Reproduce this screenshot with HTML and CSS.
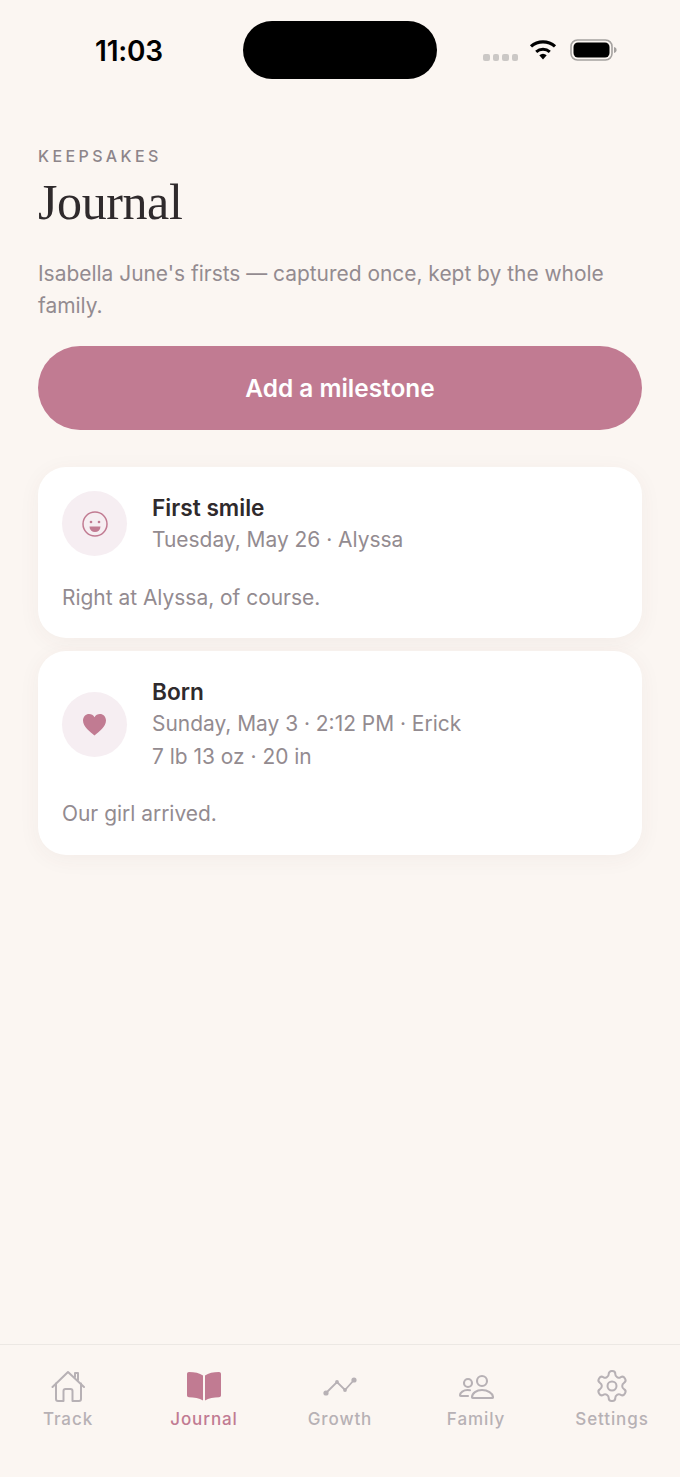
FILE: index.html
```html
<!DOCTYPE html>
<html lang="en">
<head>
<meta charset="utf-8">
<title>Journal</title>
<link rel="stylesheet" href="styles.css">
</head>
<body>
<div class="page">
  <header class="status">
    <span class="time">11:03</span>
    <div class="island"></div>
    <div class="status-icons">
      <div class="dots"><i></i><i></i><i></i><i></i></div>
      <svg class="wifi" viewBox="0 0 28 20" width="28" height="20"><path d="M14 19.500 10.300 15.300a5.600 5.600 0 0 1 7.400 0Z" fill="#000"/><path d="M7.200 11.900a10.200 10.200 0 0 1 13.600 0" fill="none" stroke="#000" stroke-width="3"/><path d="M2 6.400a18 18 0 0 1 24 0" fill="none" stroke="#000" stroke-width="3.200"/></svg>
      <svg class="battery" viewBox="0 0 47 22" width="47" height="22"><rect x="1" y="1" width="41" height="20" rx="6.500" fill="none" stroke="#a5a2a0" stroke-width="1.600"/><rect x="3.500" y="3.500" width="36" height="15" rx="4.500" fill="#000"/><path d="M44 8v6c1.800-.4 2.600-1.600 2.600-3S45.800 8.400 44 8Z" fill="#a5a2a0"/></svg>
    </div>
  </header>

  <main class="content">
    <p class="eyebrow">KEEPSAKES</p>
    <h1 class="title">Journal</h1>
    <p class="intro">Isabella June's firsts — captured once, kept by the whole family.</p>
    <button class="cta" type="button">Add a milestone</button>

    <article class="card">
      <div class="card-head">
        <div class="badge">
          <svg viewBox="0 0 26 26" width="26" height="26"><circle cx="13" cy="13" r="12" fill="none" stroke="#c17b92" stroke-width="1.500"/><circle cx="9" cy="11" r="1.300" fill="#c17b92"/><circle cx="17" cy="11" r="1.300" fill="#c17b92"/><path d="M7.500 15.500h11a5.500 5.500 0 0 1-11 0Z" fill="#c17b92"/></svg>
        </div>
        <div class="card-text">
          <h2 class="card-title">First smile</h2>
          <p class="meta">Tuesday, May 26 · Alyssa</p>
        </div>
      </div>
      <p class="note">Right at Alyssa, of course.</p>
    </article>

    <article class="card">
      <div class="card-head">
        <div class="badge">
          <svg viewBox="0 0 26 24" width="25" height="23"><path d="M13 23.500C8.500 19.500 1 14.500 1 7.800 1 3.800 4 1 7.300 1 9.700 1 11.800 2.200 13 4.400 14.200 2.200 16.300 1 18.700 1 22 1 25 3.800 25 7.800 25 14.500 17.500 19.500 13 23.500Z" fill="#c17b92"/></svg>
        </div>
        <div class="card-text">
          <h2 class="card-title">Born</h2>
          <p class="meta">Sunday, May 3 · 2:12 PM · Erick</p>
          <p class="meta">7 lb 13 oz · 20 in</p>
        </div>
      </div>
      <p class="note">Our girl arrived.</p>
    </article>
  </main>

  <nav class="tabs">
    <div class="tab">
      <svg viewBox="0 0 34 32" width="34" height="32" fill="none" stroke="#b7b1b5" stroke-width="2" stroke-linejoin="round" stroke-linecap="round"><path d="M1.500 17 17 2l16 15"/><path d="M5 13.500V29q0 2 2 2H12.500V21q0-2 2-2h5q2 0 2 2V31H28q2 0 2-2V13.500"/><path d="M24 7V3H27V10"/></svg>
      <span>Track</span>
    </div>
    <div class="tab active">
      <svg viewBox="0 0 34 32" width="34" height="32" fill="#c17b92"><path d="M16 5.500V30.500C12.500 28.300 7 27.400 2 27.300 .8 27.300 0 26.500 0 25.300V4C0 2.800 .8 2 2 2 7.500 2 12.700 3 16 5.500Z"/><path d="M18 5.500V30.500C21.500 28.300 27 27.400 32 27.300 33.200 27.300 34 26.500 34 25.300V4C34 2.800 33.200 2 32 2 26.500 2 21.300 3 18 5.500Z"/></svg>
      <span>Journal</span>
    </div>
    <div class="tab">
      <svg viewBox="0 0 34 32" width="34" height="32" fill="#b7b1b5"><path d="M3 23 14 12 22 20 31 10" fill="none" stroke="#b7b1b5" stroke-width="1.800"/><circle cx="3" cy="23" r="2.600"/><circle cx="14" cy="12" r="1.900"/><circle cx="22" cy="20" r="1.900"/><circle cx="31" cy="10" r="2.600"/></svg>
      <span>Growth</span>
    </div>
    <div class="tab">
      <svg viewBox="0 0 36 32" width="36" height="32" fill="none" stroke="#b7b1b5" stroke-width="2.100" stroke-linecap="round"><circle cx="10" cy="13" r="4"/><circle cx="24" cy="11" r="5"/><path d="M12 20.300c-.8-.2-1.600-.3-2.500-.3C5.500 20 2 22.300 2 25.300c0 .5.300.7.700.7H10"/><path d="M14 27.300c0-4.200 4.500-7.300 10-7.300s11 3.100 11 7.300c0 .5-.3.700-.7.700H14.700c-.4 0-.7-.2-.7-.7Z"/></svg>
      <span>Family</span>
    </div>
    <div class="tab">
      <svg viewBox="1.300 1.300 21.400 21.400" width="32" height="32" fill="none" stroke="#b7b1b5" stroke-width="1.350" stroke-linejoin="round"><circle cx="12" cy="12" r="3"/><path d="M12.220 2h-.44a2 2 0 0 0-2 2v.18a2 2 0 0 1-1 1.730l-.43.25a2 2 0 0 1-2 0l-.15-.08a2 2 0 0 0-2.730.73l-.22.38a2 2 0 0 0 .73 2.730l.15.1a2 2 0 0 1 1 1.720v.51a2 2 0 0 1-1 1.740l-.15.09a2 2 0 0 0-.73 2.730l.22.38a2 2 0 0 0 2.730.73l.15-.08a2 2 0 0 1 2 0l.43.25a2 2 0 0 1 1 1.730V20a2 2 0 0 0 2 2h.44a2 2 0 0 0 2-2v-.18a2 2 0 0 1 1-1.730l.43-.25a2 2 0 0 1 2 0l.15.08a2 2 0 0 0 2.730-.73l.22-.39a2 2 0 0 0-.73-2.730l-.15-.08a2 2 0 0 1-1-1.740v-.5a2 2 0 0 1 1-1.740l.15-.09a2 2 0 0 0 .73-2.730l-.22-.38a2 2 0 0 0-2.730-.73l-.15.08a2 2 0 0 1-2 0l-.43-.25a2 2 0 0 1-1-1.730V4a2 2 0 0 0-2-2z"/></svg>
      <span>Settings</span>
    </div>
  </nav>
</div>
</body>
</html>
```

FILE: styles.css
```css
* { box-sizing: border-box; margin: 0; padding: 0; }

html, body { background: #fbf6f2; }

body {
  font-family: Inter, "Noto Sans", sans-serif;
  color: #2f2a2c;
}

.page {
  width: 680px;
  height: 1477px;
  display: flex;
  flex-direction: column;
  overflow: hidden;
}

.status {
  height: 100px;
  flex: none;
  position: relative;
  display: flex;
  align-items: center;
  justify-content: space-between;
  padding: 0 63px 0 95px;
}

.time {
  font-size: 28px;
  font-weight: 600;
  color: #000;
  line-height: 32px;
  letter-spacing: -0.2px;
  margin-top: 1px;
}

.island {
  position: absolute;
  left: 243px;
  top: 21px;
  width: 194px;
  height: 58px;
  border-radius: 29px;
  background: #000;
}

.status-icons {
  display: flex;
  align-items: center;
  gap: 13px;
}

.dots {
  display: flex;
  gap: 3px;
  margin-top: 15px;
  margin-right: -2px;
}

.dots i {
  width: 6.500px;
  height: 6.500px;
  border-radius: 2px;
  background: #cbc8c6;
}

.wifi { margin-top: -1px; }

.content {
  flex: 1;
  padding: 46px 38px 0;
  display: flex;
  flex-direction: column;
}

.eyebrow {
  font-size: 16px;
  font-weight: 500;
  line-height: 20px;
  letter-spacing: 3.400px;
  color: #8d858a;
}

.title {
  font-family: "Liberation Serif", serif;
  font-size: 50px;
  font-weight: 400;
  line-height: 56px;
  letter-spacing: -0.4px;
  margin-top: 8px;
  color: #2f2a2c;
}

.intro {
  font-size: 20.930px;
  line-height: 32px;
  color: #938b90;
  margin-top: 28px;
}

.cta {
  height: 84px;
  margin-top: 24px;
  border: none;
  border-radius: 42px;
  background: #c17b92;
  color: #fff;
  font-family: inherit;
  font-size: 24.420px;
  font-weight: 600;
}

.card {
  background: #fff;
  border-radius: 28px;
  padding: 24px 24px 24.500px;
  box-shadow: 0 4px 22px rgba(90, 60, 50, 0.05);
  margin-bottom: 13px;
}

.cta + .card { margin-top: 37px; }

.card-head {
  display: flex;
  align-items: center;
  gap: 25px;
}

.badge {
  width: 65px;
  height: 65px;
  flex: none;
  border-radius: 50%;
  background: #f6eef2;
  display: flex;
  align-items: center;
  justify-content: center;
}

.card-title {
  font-size: 22.670px;
  font-weight: 600;
  line-height: 33px;
  color: #2f2a2c;
}

.meta {
  font-size: 20.930px;
  line-height: 32.500px;
  color: #938b90;
}

.note {
  font-size: 20.930px;
  line-height: 32px;
  color: #938b90;
  margin-top: 25px;
}

.tabs {
  height: 133px;
  flex: none;
  border-top: 1px solid #ece8e4;
  display: grid;
  grid-template-columns: repeat(5, 1fr);
  padding-top: 25px;
}

.tab {
  display: flex;
  flex-direction: column;
  align-items: center;
  gap: 6px;
  color: #b7b1b5;
  font-size: 17px;
  font-weight: 500;
  line-height: 22px;
  letter-spacing: 0.900px;
}

.tab.active { color: #c17b92; }
```
